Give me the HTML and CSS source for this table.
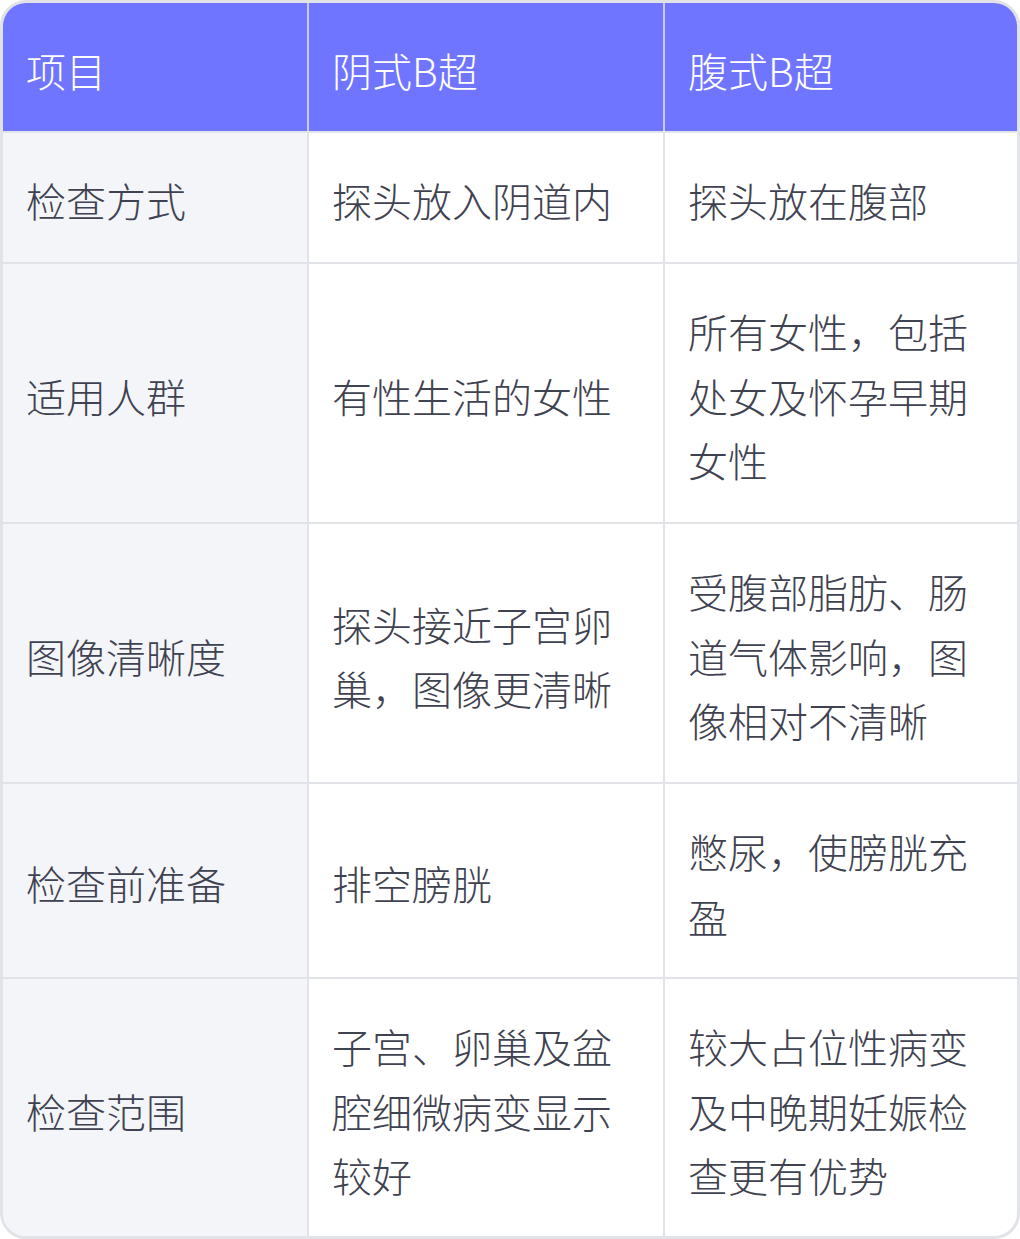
FILE: index.html
```html
<!DOCTYPE html>
<html lang="zh">
<head>
<meta charset="utf-8">
<link rel="stylesheet" href="styles.css">
</head>
<body>
<div class="wrap">
<table class="cmp">
<colgroup><col class="c1"><col class="c2"><col class="c3"></colgroup>
<thead>
<tr><th>项目</th><th>阴式B超</th><th>腹式B超</th></tr>
</thead>
<tbody>
<tr class="r1"><td>检查方式</td><td>探头放入阴道内</td><td>探头放在腹部</td></tr>
<tr class="r3"><td>适用人群</td><td>有性生活的女性</td><td>所有女性，包括处女及怀孕早期女性</td></tr>
<tr class="r3"><td>图像清晰度</td><td>探头接近子宫卵巢，图像更清晰</td><td>受腹部脂肪、肠道气体影响，图像相对不清晰</td></tr>
<tr class="r2"><td>检查前准备</td><td>排空膀胱</td><td>憋尿，使膀胱充盈</td></tr>
<tr class="r3"><td>检查范围</td><td>子宫、卵巢及盆腔细微病变显示较好</td><td>较大占位性病变及中晚期妊娠检查更有优势</td></tr>
</tbody>
</table>
</div>
</body>
</html>
```
FILE: styles.css
```css
html, body {
  margin: 0;
  padding: 0;
  background: #ffffff;
}
.wrap {
  width: 1020px;
  height: 1239px;
  box-sizing: border-box;
  border: 3px solid #e2e3e8;
  border-radius: 26px;
  overflow: hidden;
  background: #ffffff;
}
.cmp {
  width: 1014px;
  border-collapse: collapse;
  table-layout: fixed;
  font-family: "Noto Sans CJK SC", "Noto Sans", sans-serif;
  font-weight: 300;
  font-size: 40px;
  line-height: 64.5px;
  color: #3f4250;
}
.c1 { width: 305px; }
.c2 { width: 356px; }
.c3 { width: 353px; }
.cmp th, .cmp td {
  text-align: left;
  vertical-align: middle;
  padding: 35px 20px 29px 23px;
  word-break: break-all;
}
.cmp th {
  background: #6f75ff;
  color: #ffffff;
  font-weight: 300;
  height: 64px;
  line-height: 64px;
  border-left: 2px solid #c9cbff;
  border-bottom: 2px solid #e2e3e8;
}
.cmp th:first-child { border-left: none; }
.cmp td {
  border-top: 2px solid #e2e3e8;
  border-left: 2px solid #e2e3e8;
}
.cmp tbody tr:first-child td { border-top: none; }
.cmp td:first-child {
  border-left: none;
  background: #f4f5f9;
}
.r1 td { height: 65px; }
.r2 td { height: 129px; }
.r3 td { height: 194px; }
```
